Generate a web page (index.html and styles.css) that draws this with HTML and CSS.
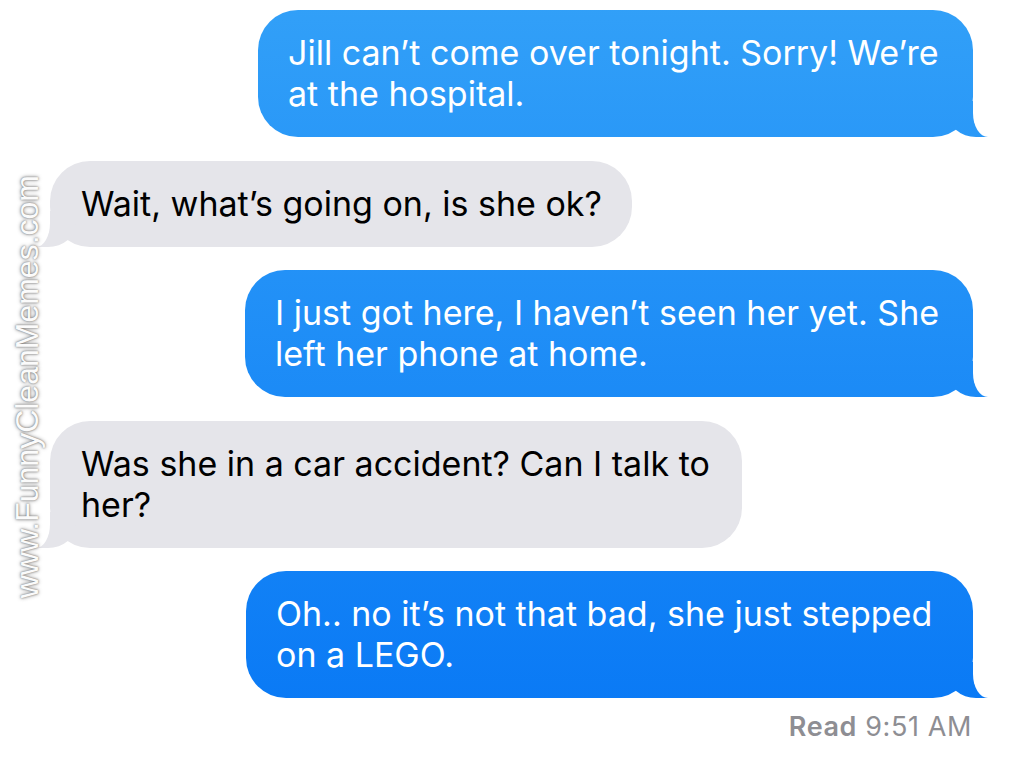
FILE: index.html
```html
<!DOCTYPE html>
<html lang="en">
<head>
<meta charset="utf-8">
<title>Messages</title>
<link rel="stylesheet" href="styles.css">
</head>
<body>
<div class="screen">
  <div class="watermark">www.FunnyCleanMemes.com</div>
  <div class="thread">
    <div class="bubble sent w-715">Jill can’t come over tonight. Sorry! We’re at the hospital.</div>
    <div class="bubble received single">Wait, what’s going on, is she ok?</div>
    <div class="bubble sent w-728">I just got here, I haven’t seen her yet. She left her phone at home.</div>
    <div class="bubble received w-692">Was she in a car accident? Can I talk to her?</div>
    <div class="bubble sent w-727">Oh.. no it’s not that bad, she just stepped on a LEGO.</div>
    <div class="receipt"><span class="receipt-label">Read</span> 9:51 AM</div>
  </div>
</div>
</body>
</html>
```
FILE: styles.css
```css
html, body {
  margin: 0;
  background: #fff;
}

body {
  font-family: Inter, "Liberation Sans", sans-serif;
}

.screen {
  position: relative;
  width: 1024px;
  height: 774px;
  overflow: hidden;
}

.thread {
  display: flex;
  flex-direction: column;
  padding: 10px 51px 0 50px;
}

.bubble {
  position: relative;
  box-sizing: border-box;
  padding: 22px 30px 23px 30px;
  font-size: 34px;
  line-height: 41px;
  border-radius: 40px;
}

.bubble + .bubble {
  margin-top: 23.5px;
}

.w-715 { width: 715px; }
.w-728 { width: 728px; }
.w-692 { width: 692px; }
.w-727 { width: 727px; }

.single {
  width: fit-content;
  white-space: nowrap;
}

.sent {
  align-self: flex-end;
  color: #fff;
  background: linear-gradient(to bottom, #32a0f8 0%, #0676f5 100%) fixed;
}

.received {
  align-self: flex-start;
  color: #000;
  background: #e5e5ea;
  padding-left: 31px;
}

.bubble::before,
.bubble::after {
  content: "";
  position: absolute;
  bottom: 0;
}

.sent::before {
  right: -15px;
  width: 40px;
  height: 36px;
  background: inherit;
  border-bottom-left-radius: 28px 24px;
}

.sent::after {
  right: -25px;
  width: 25px;
  height: 40px;
  background: #fff;
  border-bottom-left-radius: 15px 24px;
}

.received::before {
  left: -14px;
  width: 40px;
  height: 36px;
  background: inherit;
  border-bottom-right-radius: 28px 24px;
}

.received::after {
  left: -25px;
  width: 25px;
  height: 40px;
  background: #fff;
  border-bottom-right-radius: 14px 24px;
}

.receipt {
  align-self: flex-end;
  margin-top: 14px;
  margin-right: 1px;
  font-size: 27px;
  letter-spacing: 0.6px;
  line-height: 30px;
  color: #8e8e93;
}

.receipt-label {
  font-weight: 600;
}

.watermark {
  position: absolute;
  left: 11px;
  top: 175px;
  z-index: 2;
  writing-mode: vertical-rl;
  transform: rotate(180deg);
  font-family: "Liberation Sans", sans-serif;
  font-size: 32px;
  line-height: 32px;
  color: #fbfbfb;
  text-shadow: 0 0 2px #6a6a6a, 0 0 4px #969696;
}
```
